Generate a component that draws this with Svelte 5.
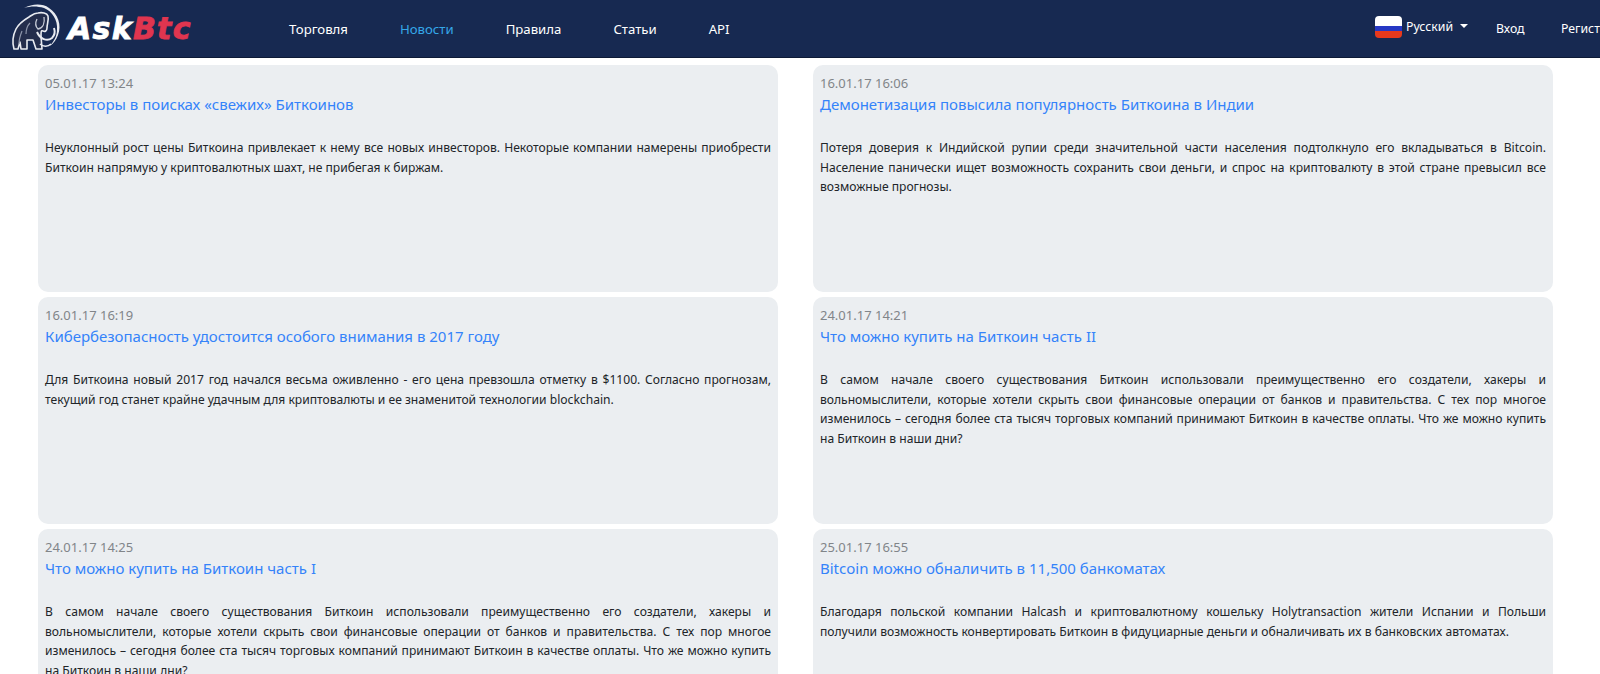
<script>
  const nav = [
    { label: 'Торговля' },
    { label: 'Новости', active: true },
    { label: 'Правила' },
    { label: 'Статьи' },
    { label: 'API' }
  ];
  const news = [
    { date: '05.01.17 13:24', title: 'Инвесторы в поисках «свежих» Биткоинов', text: 'Неуклонный рост цены Биткоина привлекает к нему все новых инвесторов. Некоторые компании намерены приобрести Биткоин напрямую у криптовалютных шахт, не прибегая к биржам.' },
    { date: '16.01.17 16:06', title: 'Демонетизация повысила популярность Биткоина в Индии', text: 'Потеря доверия к Индийской рупии среди значительной части населения подтолкнуло его вкладываться в Bitcoin. Население панически ищет возможность сохранить свои деньги, и спрос на криптовалюту в этой стране превысил все возможные прогнозы.' },
    { date: '16.01.17 16:19', title: 'Кибербезопасность удостоится особого внимания в 2017 году', text: 'Для Биткоина новый 2017 год начался весьма оживленно - его цена превзошла отметку в $1100. Согласно прогнозам, текущий год станет крайне удачным для криптовалюты и ее знаменитой технологии blockchain.' },
    { date: '24.01.17 14:21', title: 'Что можно купить на Биткоин часть II', text: 'В самом начале своего существования Биткоин использовали преимущественно его создатели, хакеры и вольномыслители, которые хотели скрыть свои финансовые операции от банков и правительства. С тех пор многое изменилось – сегодня более ста тысяч торговых компаний принимают Биткоин в качестве оплаты. Что же можно купить на Биткоин в наши дни?' },
    { date: '24.01.17 14:25', title: 'Что можно купить на Биткоин часть I', text: 'В самом начале своего существования Биткоин использовали преимущественно его создатели, хакеры и вольномыслители, которые хотели скрыть свои финансовые операции от банков и правительства. С тех пор многое изменилось – сегодня более ста тысяч торговых компаний принимают Биткоин в качестве оплаты. Что же можно купить на Биткоин в наши дни?' },
    { date: '25.01.17 16:55', title: 'Bitcoin можно обналичить в 11,500 банкоматах', text: 'Благодаря польской компании Halcash и криптовалютному кошельку Holytransaction жители Испании и Польши получили возможность конвертировать Биткоин в фидуциарные деньги и обналичивать их в банковских автоматах.' }
  ];
</script>

<div class="page">
  <header class="bar">
    <a class="brand" href="#top">
      <svg class="mark" width="62" height="56" viewBox="5 0 62 56" fill="none">
        <path d="M24 7C32 3 42 2 49 7 58 13 62 24 58 34 56 39 54 42 50 45 54 40 57 35 57 29 58 19 52 10 44 7 37 5 31 5 24 7z" fill="#e8ebf1"/>
        <path d="M14 48C12 41 13 34 16 28 19 22 24 19 29 16 32 14 34 12 38 12 42 11 47 12 48 15 49 19 47 23 47 27 47 30 45 31 43 30 41 29 41 31 41 35L42 48H36L33 39H27L27 48H21L20 41 18 48z" fill="#232d4c" stroke="#e8ebf1" stroke-width="1.6" stroke-linejoin="round"/>
        <path d="M37 31C40 38 47 41 52 37 55 34 55 30 54 27" stroke="#e8ebf1" stroke-width="2"/>
        <path d="M40 43C43 46 48 46 51 43" stroke="#e8ebf1" stroke-width="1.6"/>
        <path d="M44 16C45 22 43 27 38 28 36 26 35 22 37 18" stroke="#c5cad6" stroke-width="1.3"/>
        <path d="M22 30C20 35 19 39 19 43M30 22C27 25 26 29 26 33" stroke="#8d95aa" stroke-width="1.2"/>
      </svg>
      <span class="word"><span class="ask">Ask</span><span class="btc">Btc</span></span>
    </a>
    <nav class="menu">
      {#each nav as item}
        <a href="#top" class:active={item.active}>{item.label}</a>
      {/each}
    </nav>
    <div class="right">
      <span class="lang">
        <span class="flag"></span>
        <span>Русский</span>
        <span class="caret"></span>
      </span>
      <a href="#top" class="login">Вход</a>
      <a href="#top" class="reg">Регистрация</a>
    </div>
  </header>

  <main class="grid">
    {#each news as n}
      <article class="card">
        <div class="date">{n.date}</div>
        <a class="title" href="#top">{n.title}</a>
        <p>{n.text}</p>
      </article>
    {/each}
  </main>
</div>

<style>
  :global(body) {
    margin: 0;
    background: #fff;
    overflow: hidden;
  }
  .page {
    width: 1600px;
    height: 674px;
    overflow: hidden;
    font-family: "Noto Sans", "Open Sans", sans-serif;
  }
  a { text-decoration: none; }
  .bar {
    height: 58px;
    box-sizing: border-box;
    background: #172951;
    border-bottom: 1px solid #0d1a36;
    display: flex;
    align-items: center;
    white-space: nowrap;
    overflow: hidden;
  }
  .brand {
    display: flex;
    align-items: center;
    width: 289px;
    flex: none;
    padding-left: 5px;
    box-sizing: border-box;
  }
  .word {
    font-family: "DejaVu Sans", sans-serif;
    font-weight: 700;
    font-style: italic;
    font-size: 30px;
    letter-spacing: 1.3px;
    margin-left: 1px;
    line-height: 1;
    -webkit-text-stroke: 0.8px currentColor;
  }
  .ask { color: #fff; }
  .btc { color: #e0354f; }
  .menu {
    display: flex;
    gap: 52px;
    flex: none;
  }
  .menu a {
    color: #fff;
    font-size: 13.2px;
  }
  .menu a.active { color: #35a7e8; }
  .right {
    margin-left: auto;
    display: flex;
    align-items: center;
    width: 225px;
    flex: none;
    color: #fff;
    font-size: 12.3px;
  }
  .lang {
    display: flex;
    align-items: center;
    gap: 4px;
    width: 121px;
    flex: none;
    position: relative;
    top: -2px;
  }
  .flag {
    width: 27px;
    height: 22px;
    border-radius: 4px;
    background: linear-gradient(#fff 0 45%, #2638c4 45% 68%, #e8391c 68% 100%);
  }
  .caret {
    width: 0;
    height: 0;
    border: 4px solid transparent;
    border-top: 4px solid #fff;
    border-bottom: 0;
    margin-left: 3px;
    margin-top: -2px;
  }
  .login { color: #fff; width: 65px; flex: none; }
  .reg { color: #fff; flex: none; }
  .grid {
    display: grid;
    grid-template-columns: 740px 740px;
    column-gap: 35px;
    row-gap: 5px;
    padding: 7px 0 0 38px;
  }
  .card {
    height: 227px;
    box-sizing: border-box;
    background: #ebeef1;
    border-radius: 10px;
    padding: 8.5px 7px;
  }
  .date {
    font-size: 13px;
    line-height: 18px;
    color: #818589;
  }
  .title {
    display: block;
    font-size: 15px;
    line-height: 21px;
    margin-top: 2.5px;
    color: #3483fa;
  }
  p {
    margin: 23px 0 0;
    font-size: 12.1px;
    line-height: 19.5px;
    color: #212529;
    text-align: justify;
  }
</style>
